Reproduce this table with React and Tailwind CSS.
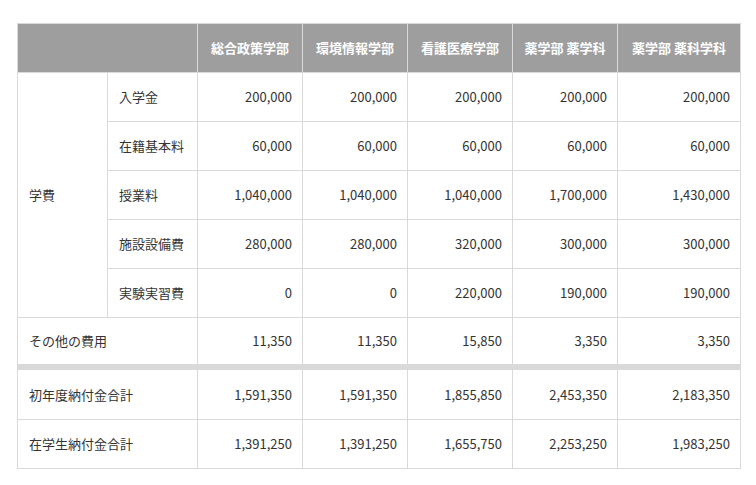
const font = { fontFamily: '"Noto Sans CJK JP", "Noto Sans", sans-serif' };

const depts = ['総合政策学部', '環境情報学部', '看護医療学部', '薬学部 薬学科', '薬学部 薬科学科'];

const tuition = [
  ['入学金', ['200,000', '200,000', '200,000', '200,000', '200,000']],
  ['在籍基本料', ['60,000', '60,000', '60,000', '60,000', '60,000']],
  ['授業料', ['1,040,000', '1,040,000', '1,040,000', '1,700,000', '1,430,000']],
  ['施設設備費', ['280,000', '280,000', '320,000', '300,000', '300,000']],
  ['実験実習費', ['0', '0', '220,000', '190,000', '190,000']],
];

const other = ['11,350', '11,350', '15,850', '3,350', '3,350'];

const totals = [
  ['初年度納付金合計', ['1,591,350', '1,591,350', '1,855,850', '2,453,350', '2,183,350']],
  ['在学生納付金合計', ['1,391,250', '1,391,250', '1,655,750', '2,253,250', '1,983,250']],
];

const cell = 'border border-[#d9d9d9] text-[13px] text-[#333]';
const num = cell + ' text-right pr-[10px]';
const label = cell + ' text-left pl-[11px]';

export default function App() {
  return (
    <div className="bg-white w-[756px] h-[485px] pt-[23px] pl-[17px]" style={font}>
      <table className="table-fixed border-collapse w-[723px]">
        <colgroup>
          <col className="w-[90px]" />
          <col className="w-[90px]" />
          <col className="w-[105px]" />
          <col className="w-[105px]" />
          <col className="w-[105px]" />
          <col className="w-[105px]" />
          <col className="w-[123px]" />
        </colgroup>
        <thead>
          <tr className="bg-[#9e9e9e]">
            <th colSpan={2} className="border border-[#d9d9d9] h-[49px]"></th>
            {depts.map(d => (
              <th key={d} className="border border-[#d9d9d9] h-[49px] text-[13px] font-bold text-white text-center">
                {d}
              </th>
            ))}
          </tr>
        </thead>
        <tbody>
          {tuition.map(([name, vals], i) => (
            <tr key={name}>
              {i === 0 && (
                <td rowSpan={5} className={label}>学費</td>
              )}
              <td className={label + ' h-[49px]'}>{name}</td>
              {vals.map((v, j) => (
                <td key={j} className={num + ' h-[49px]'}>{v}</td>
              ))}
            </tr>
          ))}
          <tr>
            <td colSpan={2} className={label + ' h-[49px]'}>その他の費用</td>
            {other.map((v, j) => (
              <td key={j} className={num + ' h-[49px]'}>{v}</td>
            ))}
          </tr>
          {totals.map(([name, vals], i) => {
            const extra = i === 0 ? ' border-t-[6px] h-[53px]' : ' h-[49px]';
            return (
              <tr key={name}>
                <td colSpan={2} className={label + extra}>{name}</td>
                {vals.map((v, j) => (
                  <td key={j} className={num + extra}>{v}</td>
                ))}
              </tr>
            );
          })}
        </tbody>
      </table>
    </div>
  );
}
